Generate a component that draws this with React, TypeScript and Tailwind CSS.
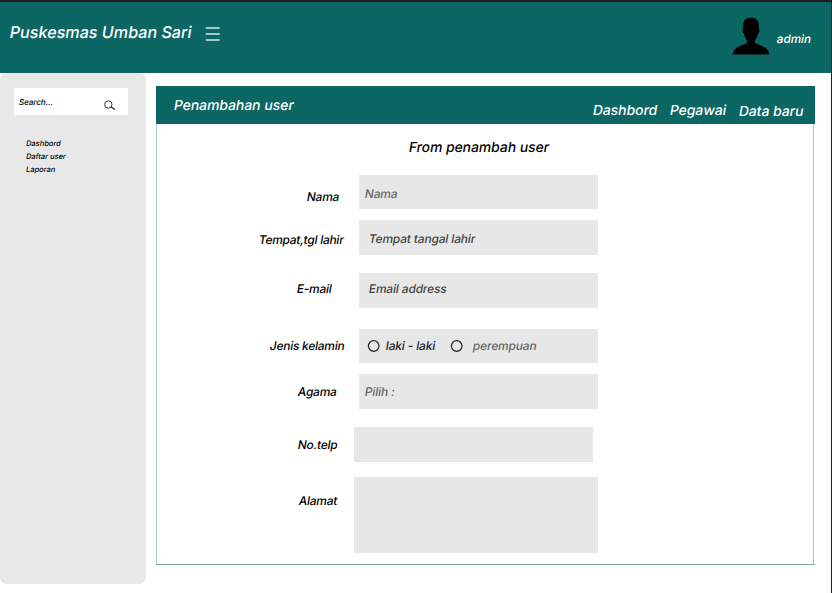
import type { ReactNode } from "react";

type RowProps = {
  label: string;
  row: string;
  labelClass: string;
  fieldClass: string;
  children?: ReactNode;
};

function Slant({ children }: { children: ReactNode }) {
  return <span className="inline-block -skew-x-[9.4deg]">{children}</span>;
}

function FormRow({ label, row, labelClass, fieldClass, children }: RowProps) {
  return (
    <div className={`flex items-start ${row}`}>
      <div className={`shrink-0 whitespace-nowrap font-medium tracking-[-0.22px] text-black ${labelClass}`}><Slant>{label}</Slant></div>
      <div className={`flex shrink-0 items-start whitespace-nowrap bg-[#e7e7e7] tracking-[-0.12px] ${fieldClass}`}>{children}</div>
    </div>
  );
}

function Radio() {
  return (
    <svg className="mt-[11px] h-[13px] w-[13px] shrink-0" viewBox="0 0 13 13" fill="none">
      <circle cx="6.7" cy="6" r="5.3" stroke="#222" strokeWidth="1.2" />
    </svg>
  );
}

export default function App() {
  return (
    <div className="flex h-[593px] w-[832px] flex-col overflow-hidden border-r border-t-[2.5px] border-r-[#1e1e1e] border-t-[#1e1e1e] bg-white font-['Inter',sans-serif] font-[450]">
      <header className="flex h-[71px] shrink-0 items-start bg-[#0b6664] text-white">
        <h1 className="ml-[10px] mt-[18px] w-[195px] whitespace-nowrap text-[16.15px] leading-6"><Slant>Puskesmas Umban Sari</Slant></h1>
        <svg className="mt-[24px] h-[16px] w-[15px]" viewBox="0 0 15 16" stroke="#d3e9e8" strokeWidth="1.7">
          <path d="M.7 2h14M.7 8h14M.7 14h14" />
        </svg>
        <svg className="ml-auto mt-[14px] h-[39px] w-[38px]" viewBox="0 0 38 39" fill="#000">
          <path d="M19 1.8C13.5 1.8 11.3 4.5 11.2 9V13C10.2 13.3 10.3 15.2 11 16.5C11.4 17.3 11.7 17.5 12 17.8C12.5 21 13.7 22.8 15 24V26.5C13.5 28.2 10 29 6.8 30.6C3.3 32.3 1.2 35 .5 38.5H37.5C36.8 35 34.7 32.3 31.2 30.6C28 29 24.5 28.2 23 26.5V24C24.3 22.8 25.5 21 26 17.8C26.3 17.5 26.6 17.3 27 16.5C27.7 15.2 27.8 13.3 26.8 13V9C26.7 4.5 24.5 1.8 19 1.8Z" />
        </svg>
        <span className="ml-[6.5px] mr-[20px] mt-[29px] w-[34.5px] whitespace-nowrap text-[11.7px] leading-4"><Slant>admin</Slant></span>
      </header>

      <div className="flex flex-1 items-start">
        <aside className="h-[511px] w-[146px] shrink-0 rounded-[7px] bg-[#e8e8e8] font-medium text-black">
          <div className="ml-[14px] mt-[15px] flex h-[27px] w-[113.5px] items-start bg-white">
            <span className="ml-[4.5px] mt-[8px] text-[8px] leading-3"><Slant>Search...</Slant></span>
            <svg className="ml-auto mr-[12px] mt-[12px] h-[11px] w-[12px]" viewBox="0 0 12 11" fill="none" stroke="#222">
              <circle cx="4.3" cy="4.5" r="3.7" strokeWidth=".9" />
              <path d="M6.9 6.8L10.8 9.6" strokeWidth="1.2" />
            </svg>
          </div>
          <nav className="ml-[26px] mt-[23px] flex flex-col gap-[1px] text-[7.5px] leading-[12px]">
            <a><Slant>Dashbord</Slant></a>
            <a><Slant>Daftar user</Slant></a>
            <a><Slant>Laporan</Slant></a>
          </nav>
        </aside>

        <main className="ml-[10px] mt-[13px] flex h-[479px] w-[659px] shrink-0 flex-col">
          <div className="flex h-[37.5px] shrink-0 items-start whitespace-nowrap bg-[#0b6664] text-[13.9px] leading-5 text-white">
            <h2 className="ml-[18px] mt-[9px]"><Slant>Penambahan user</Slant></h2>
            <nav className="ml-auto flex">
              <a className="mt-[13.5px] w-[77px]"><Slant>Dashbord</Slant></a>
              <a className="mt-[13.5px] w-[69px]"><Slant>Pegawai</Slant></a>
              <a className="mt-[14.5px] w-[76px]"><Slant>Data baru</Slant></a>
            </nav>
          </div>
          <section className="mr-px flex-1 border-x-[1.5px] border-b border-x-[#a7ceca] border-b-[#7aa9a3] text-[11.9px] leading-4">
            <h3 className="ml-[252px] mt-[13px] whitespace-nowrap text-[13.85px] font-medium leading-5"><Slant>From penambah user</Slant></h3>
            <FormRow label="Nama" row="mt-[18px]" labelClass="w-[202px] pl-[150px] pt-[14px]" fieldClass="h-[34px] w-[239px] pl-[6px] pt-[11px] text-[#666]">
              <Slant>Nama</Slant>
            </FormRow>
            <FormRow label="Tempat,tgl lahir" row="mt-[11px]" labelClass="w-[202px] pl-[102px] pt-[12px]" fieldClass="h-[35px] w-[239px] pl-[10px] pt-[11px] text-[#444]">
              <Slant>Tempat tangal lahir</Slant>
            </FormRow>
            <FormRow label="E-mail" row="mt-[18px]" labelClass="w-[202px] pl-[140px] pt-[8px]" fieldClass="h-[35px] w-[239px] pl-[9.5px] pt-[8px] text-[#444]">
              <Slant>Email address</Slant>
            </FormRow>
            <FormRow label="Jenis kelamin" row="mt-[21px]" labelClass="w-[202px] pl-[113px] pt-[9px]" fieldClass="h-[34px] w-[239px] pl-[8px]">
              <Radio />
              <span className="ml-[6px] mt-[9px] w-[64px] text-[#222]"><Slant>laki - laki</Slant></span>
              <Radio />
              <span className="ml-[10px] mt-[9px] text-[#666]"><Slant>perempuan</Slant></span>
            </FormRow>
            <FormRow label="Agama" row="mt-[11px]" labelClass="w-[202px] pl-[141px] pt-[10px]" fieldClass="h-[35px] w-[239px] pl-[6px] pt-[10px] text-[#666]">
              <Slant>Pilih :</Slant>
            </FormRow>
            <FormRow label="No.telp" row="mt-[18px]" labelClass="w-[197px] pl-[141px] pt-[10px]" fieldClass="h-[35px] w-[239px]" />
            <FormRow label="Alamat" row="mt-[15px]" labelClass="w-[197px] pl-[142px] pt-[16px]" fieldClass="h-[76.5px] w-[244px]" />
          </section>
          <div className="-mt-px ml-auto h-px w-px bg-[#7aa9a3]" />
        </main>
      </div>
    </div>
  );
}
